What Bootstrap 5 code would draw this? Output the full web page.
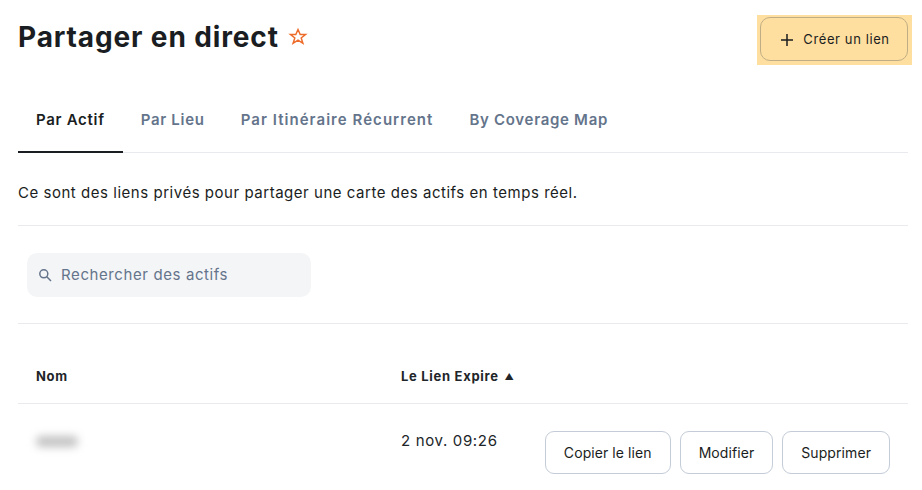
<!DOCTYPE html>
<html lang="fr">
<head>
    <meta charset="UTF-8">
    <title>Partager en direct</title>
    <link href="https://cdn.jsdelivr.net/npm/bootstrap@5.3.0/dist/css/bootstrap.min.css" rel="stylesheet">
    <style>
        body {
            font-family: "Inter", "Liberation Sans", sans-serif;
            color: #1a1d21;
            background: #fff;
            overflow: hidden;
        }

        .page-wrap {
            padding: 15px 14px 0 18px;
        }

        .page-title {
            font-size: 28px;
            font-weight: 700;
            line-height: 44px;
            margin: 0;
            letter-spacing: 0.87px;
        }

        .title-group {
            gap: 9px;
        }

        .highlight-box {
            background: #ffdf9f;
            padding: 2px 4px 4px 3px;
            margin-right: -4px;
        }

        .create-btn {
            width: 148px;
            height: 44px;
            background: #ffdf9f;
            border: 1px solid #bfae85;
            border-radius: 10px;
            font-size: 13px;
            letter-spacing: 0.6px;
            color: #1a1d21;
            padding: 1px 0 0 2px;
            gap: 9px;
        }

        .tab-row {
            margin-top: 23px;
            border-bottom: 1px solid #e8eaed;
        }

        .tab-link {
            font-size: 15px;
            font-weight: 600;
            letter-spacing: 0.7px;
            color: #64748b;
            padding: 0 18px;
            height: 65px;
            line-height: 64px;
            margin-bottom: -1px;
            text-decoration: none;
            white-space: nowrap;
        }

        .tab-link.is-active {
            color: #1a1d21;
            border-bottom: 2px solid #1a1d21;
        }

        .tab-link.tab-long {
            letter-spacing: 1.05px;
        }

        .intro-text {
            font-size: 15px;
            letter-spacing: 0.53px;
            line-height: 22px;
            padding: 29px 0 21px;
            margin: 0;
            border-bottom: 1px solid #e8eaed;
        }

        .search-row {
            padding: 27px 0 26px 9px;
            border-bottom: 1px solid #e8eaed;
        }

        .search-box {
            width: 284px;
            height: 44px;
            background: #f4f5f7;
            border-radius: 10px;
            padding-left: 11px;
            gap: 9px;
        }

        .search-box input {
            border: 0;
            background: transparent;
            font-size: 15px;
            letter-spacing: 0.6px;
            outline: none;
            flex: 1;
            min-width: 0;
            padding: 1px 0 0;
        }

        .search-box input::placeholder {
            color: #64748b;
            opacity: 1;
        }

        .links-table {
            margin: 0;
            table-layout: fixed;
        }

        .links-table th {
            font-size: 13px;
            font-weight: 700;
            letter-spacing: 0.7px;
            height: 79px;
            padding: 27px 18px 0;
            border-bottom: 1px solid #e8eaed;
            vertical-align: middle;
            white-space: nowrap;
        }

        .links-table td {
            font-size: 15px;
            line-height: 22px;
            border: 0;
            padding: 26px 18px 0;
            vertical-align: top;
        }

        .links-table th.name-col {
            width: 365px;
        }

        .links-table th.expire-col {
            width: 144px;
        }

        .sort-mark {
            font-size: 9px;
            margin-left: 2px;
            vertical-align: 1px;
        }

        .date-cell {
            letter-spacing: 0.65px;
        }

        .blurred-name {
            display: block;
            width: 42px;
            height: 11px;
            margin: 6px 0 0 0;
            background: #c2c2c2;
            border-radius: 5px;
            filter: blur(4px);
        }

        .row-actions {
            gap: 9px;
            margin-top: 1px;
        }

        .row-btn {
            height: 43px;
            font-size: 14px;
            letter-spacing: 0.08px;
            color: #1a1d21;
            background: #fff;
            border: 1px solid #c3ccd8;
            border-radius: 9px;
            padding: 1px 18px 0;
            white-space: nowrap;
        }
    </style>
</head>
<body>
    <div class="page-wrap">
        <div class="d-flex justify-content-between align-items-start">
            <div class="title-group d-flex align-items-center">
                <h1 class="page-title">Partager en direct</h1>
                <svg width="20" height="20" viewBox="0 0 20 20" fill="none" stroke="#ee6c2b" stroke-width="1.5" stroke-linejoin="miter">
                    <path d="M10 2.5l2.2 5h5.3l-4.3 3.4 1.7 5.4L10 13.2l-4.9 3.1 1.7-5.4L2.500 7.500h5.300z"/>
                </svg>
            </div>
            <div class="highlight-box d-flex">
                <button class="create-btn d-flex align-items-center justify-content-center" type="button">
                    <svg width="14" height="14" viewBox="0 0 14 14" stroke="#1a1d21" stroke-width="1.5">
                        <path d="M7 1v12M1 7h12"/>
                    </svg>
                    Créer un lien
                </button>
            </div>
        </div>

        <div class="tab-row d-flex">
            <a class="tab-link is-active" href="#">Par Actif</a>
            <a class="tab-link" href="#">Par Lieu</a>
            <a class="tab-link tab-long" href="#">Par Itinéraire Récurrent</a>
            <a class="tab-link" href="#">By Coverage Map</a>
        </div>

        <p class="intro-text">Ce sont des liens privés pour partager une carte des actifs en temps réel.</p>

        <div class="search-row">
            <div class="search-box d-flex align-items-center">
                <svg width="14" height="14" viewBox="0 0 14 14" fill="none" stroke="#64748b" stroke-width="1.5">
                    <circle cx="5.800" cy="5.800" r="4"/>
                    <path d="M8.800 8.800L13 13"/>
                </svg>
                <input type="text" placeholder="Rechercher des actifs">
            </div>
        </div>

        <table class="table links-table">
            <thead>
                <tr>
                    <th class="name-col">Nom</th>
                    <th class="expire-col">Le Lien Expire <span class="sort-mark">▲</span></th>
                    <th></th>
                </tr>
            </thead>
            <tbody>
                <tr>
                    <td><span class="blurred-name"></span></td>
                    <td class="date-cell">2 nov. 09:26</td>
                    <td>
                        <div class="row-actions d-flex justify-content-end">
                            <button class="row-btn" type="button">Copier le lien</button>
                            <button class="row-btn" type="button">Modifier</button>
                            <button class="row-btn" type="button">Supprimer</button>
                        </div>
                    </td>
                </tr>
            </tbody>
        </table>
    </div>
</body>
</html>
